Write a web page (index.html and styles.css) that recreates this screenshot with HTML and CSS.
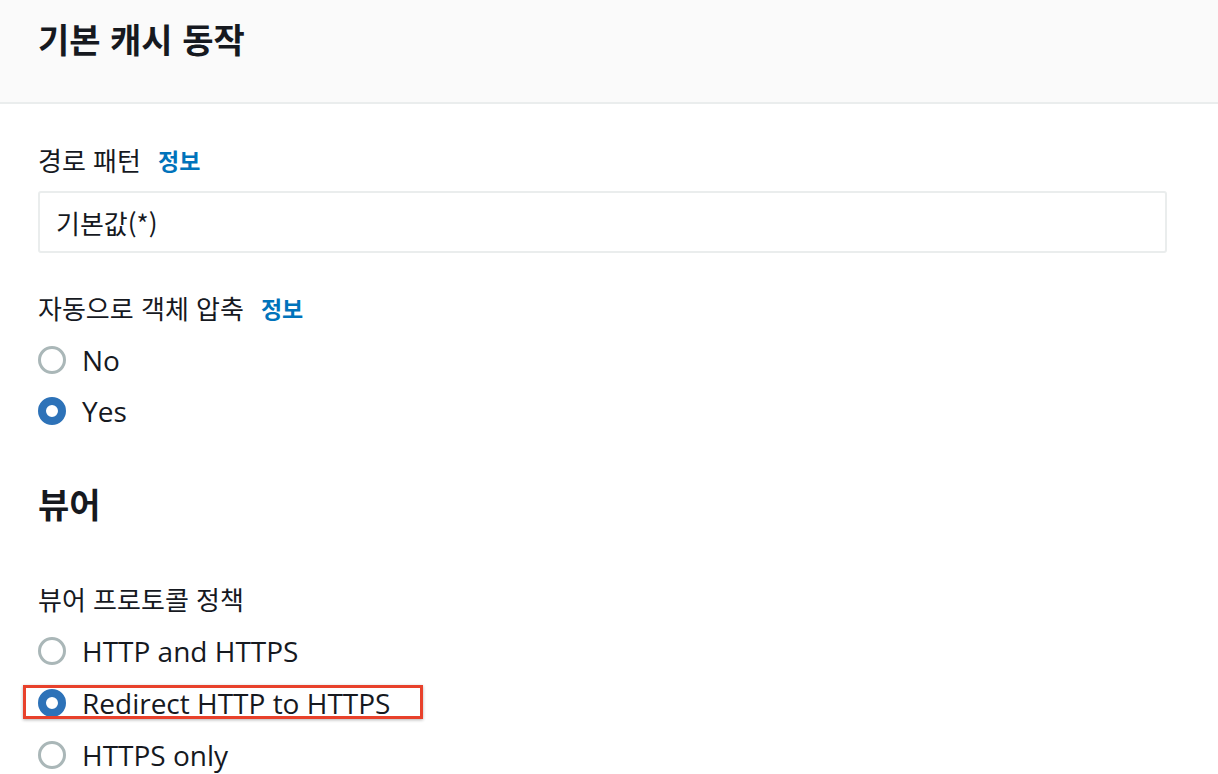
FILE: index.html
```html
<!DOCTYPE html>
<html lang="ko">
<head>
<meta charset="utf-8">
<link rel="stylesheet" href="styles.css">
</head>
<body>
<div class="page">
  <header class="panel-header">
    <h1 class="panel-title">기본 캐시 동작</h1>
  </header>
  <main class="panel-body">
    <div class="field">
      <div class="label">경로 패턴 <a class="info">정보</a></div>
      <div class="input">기본값(*)</div>
    </div>
    <div class="field field-compress">
      <div class="label">자동으로 객체 압축 <a class="info">정보</a></div>
      <div class="radios">
        <div class="radio-row"><span class="radio"></span><span class="radio-text">No</span></div>
        <div class="radio-row"><span class="radio checked"></span><span class="radio-text">Yes</span></div>
      </div>
    </div>
    <h2 class="section-title">뷰어</h2>
    <div class="field field-viewer">
      <div class="label">뷰어 프로토콜 정책</div>
      <div class="radios radios-wide">
        <div class="radio-row"><span class="radio"></span><span class="radio-text">HTTP and HTTPS</span></div>
        <div class="radio-row highlighted"><span class="radio checked"></span><span class="radio-text">Redirect HTTP to HTTPS</span><span class="annotation"></span></div>
        <div class="radio-row"><span class="radio"></span><span class="radio-text">HTTPS only</span></div>
      </div>
    </div>
  </main>
</div>
</body>
</html>
```

FILE: styles.css
```css
* { box-sizing: border-box; }
html, body { margin: 0; padding: 0; background: #ffffff; }
body {
  font-family: "Noto Sans CJK KR", "Noto Sans", sans-serif;
  color: #16191f;
  width: 1218px;
  height: 774px;
  overflow: hidden;
}
.panel-header {
  height: 104px;
  background: #fafafa;
  border-bottom: 2px solid #eaeded;
  padding: 18px 38px 0;
}
.panel-title {
  margin: 0;
  font-size: 34px;
  line-height: 42px;
  font-weight: 700;
}
.panel-body {
  padding: 38px 51px 0 38px;
}
.label {
  font-size: 26px;
  line-height: 36px;
  font-weight: 400;
  display: flex;
  align-items: center;
  gap: 17px;
}
.info {
  color: #0073bb;
  font-weight: 700;
  font-size: 23px;
}
.input {
  margin-top: 13px;
  height: 62px;
  border: 2px solid #eaeded;
  border-radius: 3px;
  padding: 0 16px;
  display: flex;
  align-items: center;
  font-size: 26px;
  font-weight: 400;
}
.field-compress { margin-top: 37px; }
.radios { margin-top: 8px; }
.radio-row {
  height: 51px;
  display: flex;
  align-items: center;
  gap: 16px;
  position: relative;
}
.radios-wide .radio-row { height: 52px; }
.radio {
  width: 28px;
  height: 28px;
  border-radius: 50%;
  border: 3px solid #aab7b8;
  background: #fff;
  flex: none;
}
.radio.checked {
  border: 8px solid #2d72b8;
  background: #fff;
}
.radio-text {
  font-family: "Open Sans", "Noto Sans", sans-serif;
  font-size: 28px;
  line-height: 36px;
  font-weight: 500;
}
.section-title {
  margin: 47px 0 0;
  font-size: 34px;
  line-height: 42px;
  font-weight: 700;
}
.field-viewer { margin-top: 56px; }
.annotation {
  position: absolute;
  left: -15px;
  top: 8px;
  width: 400px;
  height: 34px;
  border: 3px solid #e8412b;
  box-shadow: 0 1px 3px rgba(0,0,0,0.3);
  pointer-events: none;
}
```
